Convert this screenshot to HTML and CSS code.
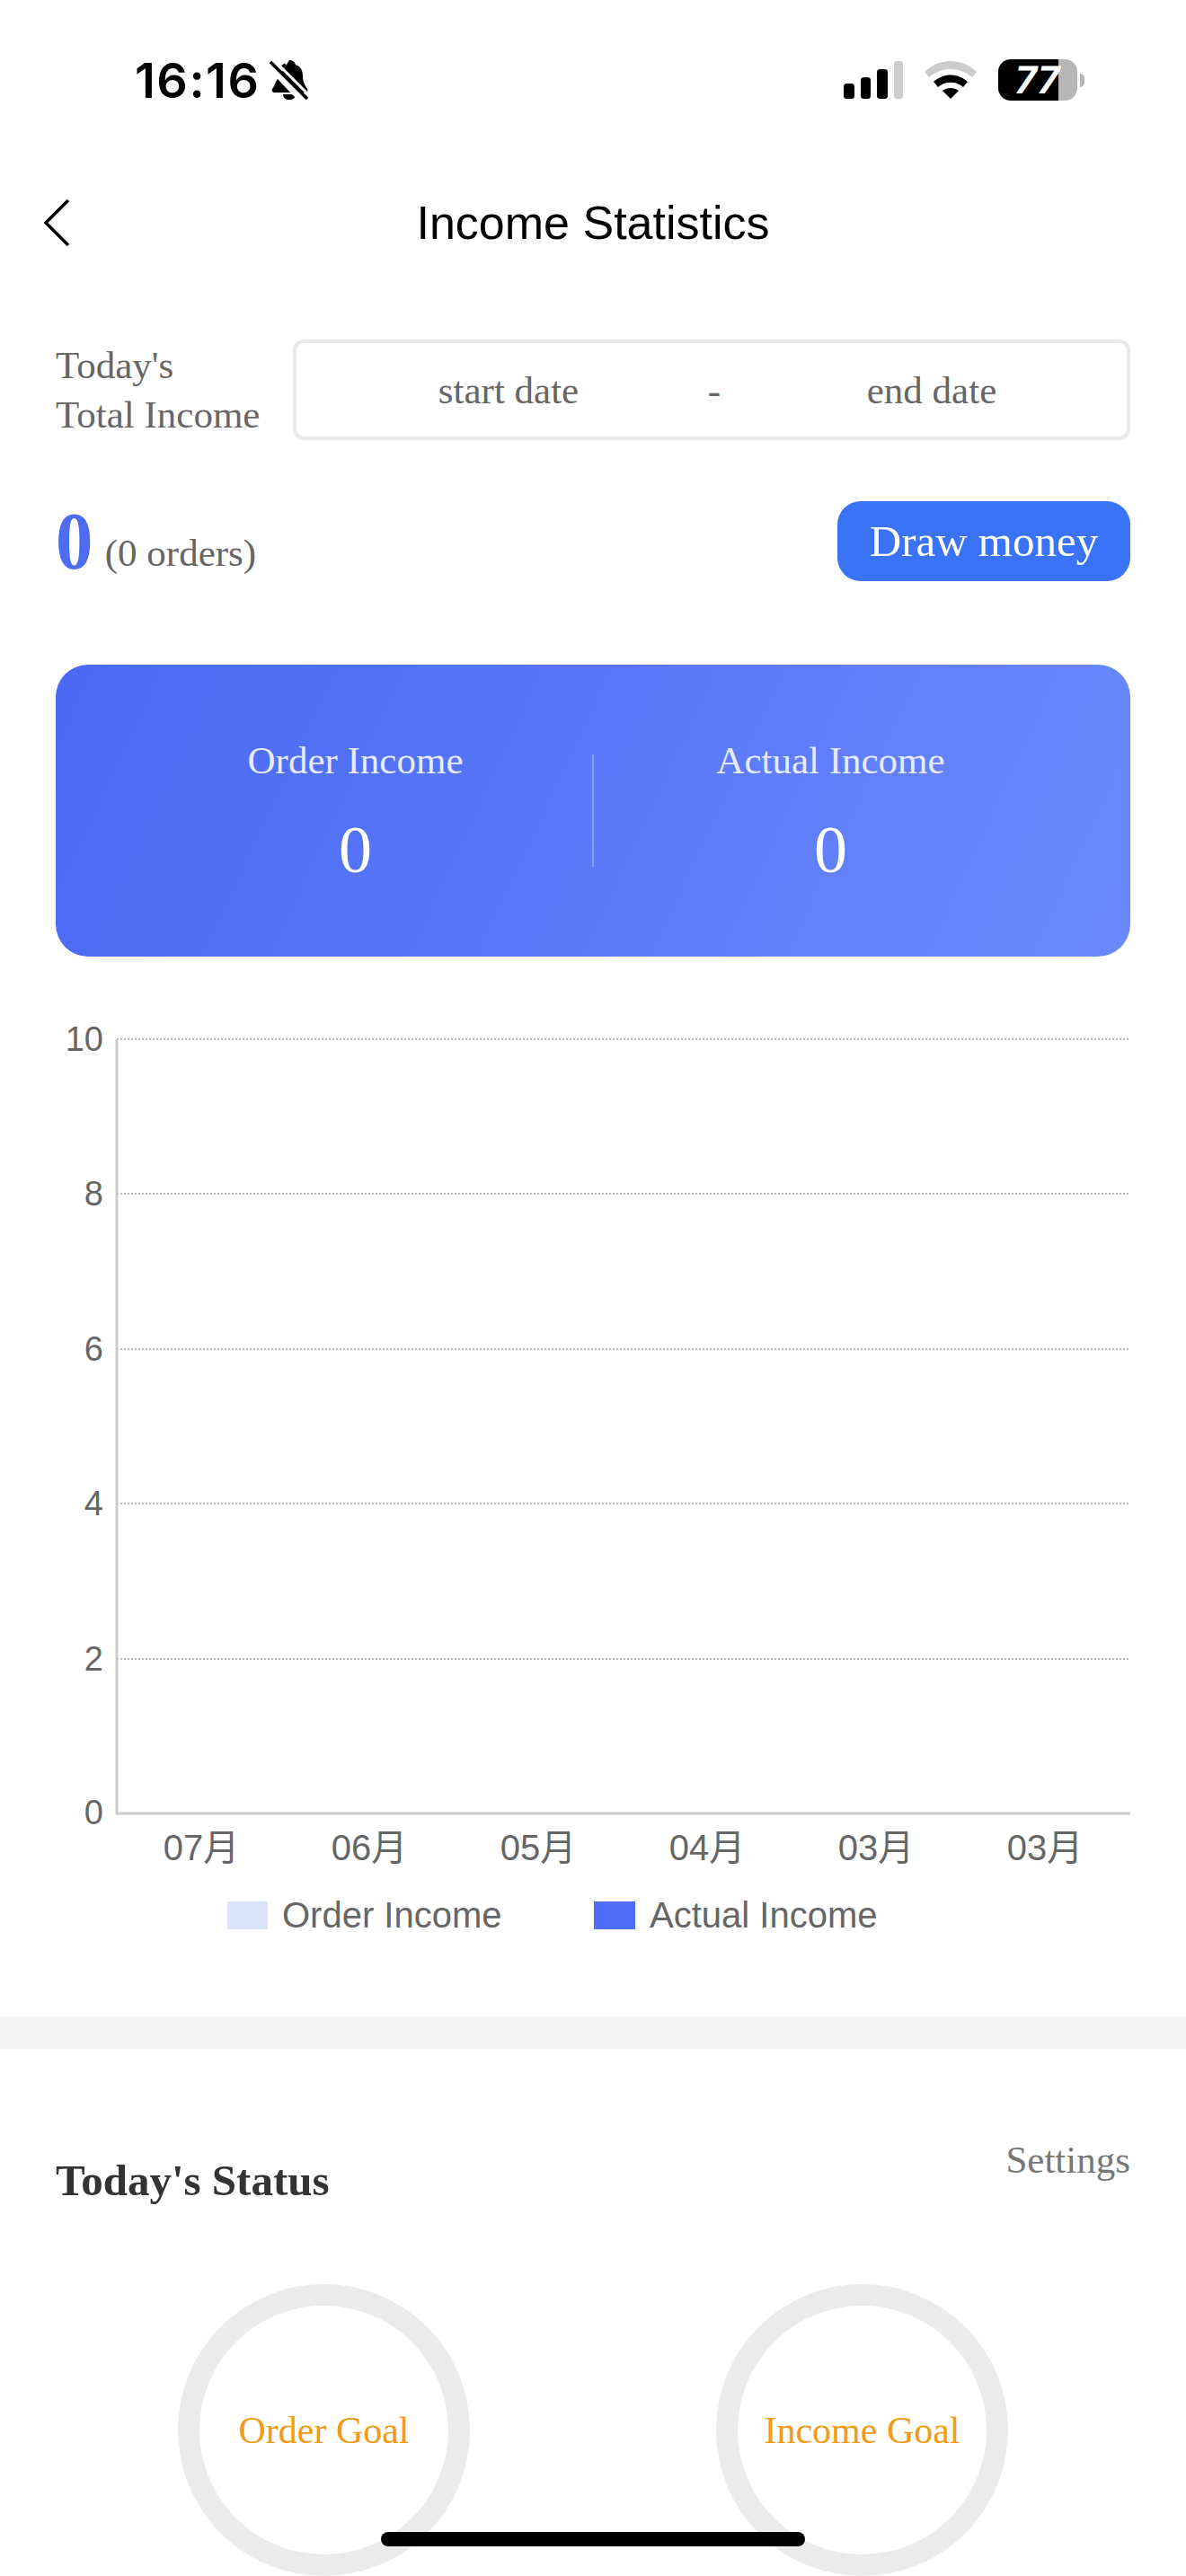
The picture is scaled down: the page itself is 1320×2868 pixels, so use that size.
FILE: index.html
```html
<!DOCTYPE html>
<html lang="en">
<head>
    <meta charset="UTF-8">
    <title>Income Statistics</title>
    <link rel="stylesheet" href="styles.css">
</head>
<body>
    <div class="pantalla">
        <div class="status-bar">
            <div class="status-left">
                <span class="hora">16:16</span>
                <svg class="campana" width="44" height="46" viewBox="0 0 44 46">
                    <path d="M22 1c4 0 6 2 7 5 6 2 8 7 8 13 0 6 2 9 5 14 1 2 0 4-2 4L6 37c-3 0-4-2-3-4 2-3 3-5 4-8z" fill="#000"/>
                    <path d="M14 9c1-1 2-2 4-3" stroke="#000" stroke-width="4" fill="none"/>
                    <path d="M15 39h14c0 4-3 6-7 6s-7-2-7-6z" fill="#000"/>
                    <path d="M1 7l36 38" stroke="#fff" stroke-width="9"/>
                    <path d="M1 3l41 41" stroke="#000" stroke-width="3.5"/>
                    <path d="M6 2l36 36" stroke="#fff" stroke-width="3"/>
                </svg>
            </div>
            <div class="status-right">
                <svg width="66" height="42" viewBox="0 0 66 42">
                    <rect x="0" y="25" width="12" height="17" rx="3.5" fill="#000"/>
                    <rect x="19" y="18" width="11" height="24" rx="3.5" fill="#000"/>
                    <rect x="37" y="9" width="12" height="33" rx="3.5" fill="#000"/>
                    <rect x="56" y="0" width="10" height="42" rx="3.5" fill="#ccc"/>
                </svg>
                <svg class="wifi" width="58" height="42" viewBox="0 0 58 42">
                    <path d="M0 12C16-4 42-4 58 12l-5 6C39 6 19 6 5 18z" fill="#ccc"/>
                    <path d="M10 23c11-10 27-10 38 0l-5 6c-8-7-20-7-28 0z" fill="#000"/>
                    <path d="M20 33c5-4 13-4 18 0l-9 9z" fill="#000"/>
                </svg>
                <div class="bateria">
                    <div class="bateria-nivel"><span>77</span></div>
                    <div class="bateria-resto"></div>
                    <div class="bateria-punta"></div>
                </div>
            </div>
        </div>

        <div class="nav">
            <svg class="atras" width="30" height="54" viewBox="0 0 30 54">
                <path d="M28 2L3 27l25 25" stroke="#000" stroke-width="3.5" fill="none"/>
            </svg>
            <h1>Income Statistics</h1>
        </div>

        <div class="resumen">
            <div class="fila-fecha">
                <div class="etiqueta">Today's<br>Total Income</div>
                <div class="rango">
                    <span class="fecha">start date</span>
                    <span class="guion">-</span>
                    <span class="fecha">end date</span>
                </div>
            </div>

            <div class="fila-total">
                <div class="total"><strong>0</strong> <span>(0 orders)</span></div>
                <button class="retirar">Draw money</button>
            </div>

            <div class="tarjeta">
                <div class="dato">
                    <p>Order Income</p>
                    <b>0</b>
                </div>
                <div class="separador"></div>
                <div class="dato">
                    <p>Actual Income</p>
                    <b>0</b>
                </div>
            </div>
        </div>

        <svg class="grafica" width="1320" height="1180" viewBox="0 1065 1320 1180">
            <g stroke="#bbb" stroke-width="2" stroke-dasharray="2 2">
                <path d="M130 1157H1258"/>
                <path d="M130 1329H1258"/>
                <path d="M130 1502H1258"/>
                <path d="M130 1674H1258"/>
                <path d="M130 1847H1258"/>
            </g>
            <path d="M130 1157V2019H1258" stroke="#ccc" stroke-width="3" fill="none"/>
            <g class="eje-y" text-anchor="end">
                <text x="115" y="1170">10</text>
                <text x="115" y="1342">8</text>
                <text x="115" y="1515">6</text>
                <text x="115" y="1687">4</text>
                <text x="115" y="1860">2</text>
                <text x="115" y="2031">0</text>
            </g>
            <g class="eje-x" text-anchor="middle">
                <text x="224" y="2071">07月</text>
                <text x="411" y="2071">06月</text>
                <text x="599" y="2071">05月</text>
                <text x="787" y="2071">04月</text>
                <text x="975" y="2071">03月</text>
                <text x="1163" y="2071">03月</text>
            </g>
            <rect x="253" y="2117" width="45" height="31" fill="#d9e4fc"/>
            <text class="leyenda" x="314" y="2146">Order Income</text>
            <rect x="661" y="2117" width="46" height="31" fill="#4e6cf5"/>
            <text class="leyenda" x="723" y="2146">Actual Income</text>
        </svg>

        <div class="banda"></div>

        <div class="estado">
            <div class="estado-cabecera">
                <h2>Today's Status</h2>
                <a class="ajustes">Settings</a>
            </div>
            <div class="metas">
                <div class="meta">Order Goal</div>
                <div class="meta">Income Goal</div>
            </div>
        </div>

        <div class="home"></div>
    </div>
</body>
</html>
```

FILE: styles.css
```css
* {
    margin: 0;
    padding: 0;
    box-sizing: border-box;
}

body {
    background: #fff;
    font-family: "Liberation Serif", serif;
}

.pantalla {
    position: relative;
    width: 1320px;
    height: 2868px;
    overflow: hidden;
}

/* Barra de estado */
.status-bar {
    height: 178px;
    padding: 0 113px 0 150px;
    display: flex;
    align-items: center;
    justify-content: space-between;
}

.status-left {
    display: flex;
    align-items: center;
    gap: 11px;
}

.hora {
    font-family: Inter, sans-serif;
    font-weight: 600;
    font-size: 54px;
    letter-spacing: 1.5px;
    color: #000;
}

.status-right {
    display: flex;
    align-items: flex-end;
    height: 46px;
    padding-bottom: 2px;
}

.wifi {
    margin-left: 24px;
}

.bateria {
    display: flex;
    align-items: center;
    height: 46px;
    margin-left: 24px;
    margin-bottom: -2px;
}

.bateria-nivel {
    width: 67px;
    height: 46px;
    background: #000;
    border-radius: 14px 0 0 14px;
    color: #fff;
    font-family: Inter, sans-serif;
    font-weight: 700;
    font-size: 42px;
    line-height: 46px;
    text-align: right;
}

.bateria-nivel span {
    display: inline-block;
    transform: skewX(-10deg);
    margin-right: -2px;
}

.bateria-resto {
    width: 21px;
    height: 46px;
    background: #b6b6b6;
    border-radius: 0 14px 14px 0;
}

.bateria-punta {
    width: 5px;
    height: 15px;
    margin-left: 3px;
    background: #b6b6b6;
    border-radius: 0 6px 6px 0;
}

/* Titulo */
.nav {
    position: relative;
    height: 140px;
    display: flex;
    align-items: center;
    justify-content: center;
}

.nav h1 {
    font-family: "Liberation Sans", sans-serif;
    font-weight: 400;
    font-size: 52px;
    color: #000;
}

.atras {
    position: absolute;
    left: 48px;
    top: 43px;
}

/* Resumen */
.resumen {
    padding: 60px 62px 0;
}

.fila-fecha {
    display: flex;
    align-items: center;
    justify-content: space-between;
}

.etiqueta {
    font-size: 43px;
    line-height: 55px;
    color: #666;
}

.rango {
    width: 932px;
    height: 112px;
    padding-left: 32px;
    border: 4px solid #e8e8e8;
    border-radius: 12px;
    display: grid;
    grid-template-columns: 408px 50px 1fr;
    align-items: center;
    text-align: center;
    font-size: 43px;
    color: #666;
}

.fila-total {
    margin-top: 68px;
    display: flex;
    align-items: center;
    justify-content: space-between;
}

.total {
    font-size: 43px;
    color: #666;
}

.total strong {
    display: inline-block;
    font-size: 92px;
    line-height: 89px;
    color: #4e6cf0;
    transform: scaleX(0.9);
    transform-origin: left;
    margin-right: -2px;
}

.total span {
    position: relative;
    top: -3px;
}

.retirar {
    width: 326px;
    height: 89px;
    border: none;
    border-radius: 26px;
    background: #3a73f5;
    color: #fff;
    font-family: "Liberation Serif", serif;
    font-size: 49px;
}

.tarjeta {
    margin-top: 93px;
    height: 325px;
    padding-top: 6px;
    border-radius: 36px;
    background: linear-gradient(115deg, #4a68f2, #6b89fd);
    display: flex;
    align-items: center;
    color: #fff;
}

.dato {
    width: 50%;
    text-align: center;
}

.dato:first-child {
    padding-left: 70px;
}

.dato:last-child {
    padding-right: 70px;
}

.dato p {
    font-size: 43px;
    line-height: 50px;
    color: #e6ebff;
    position: relative;
    top: -4px;
}

.dato b {
    display: block;
    margin-top: 30px;
    font-weight: 400;
    font-size: 74px;
    line-height: 80px;
}

.separador {
    width: 2px;
    height: 125px;
    margin-top: -6px;
    background: rgba(255, 255, 255, 0.3);
    flex-shrink: 0;
}

/* Grafica */
.grafica {
    display: block;
}

.grafica text {
    font-family: "Liberation Sans", "Noto Sans CJK SC", sans-serif;
    fill: #666;
}

.eje-y text {
    font-size: 38px;
}

.eje-x text {
    font-size: 40px;
}

.leyenda {
    font-size: 40px;
}

.banda {
    height: 36px;
    background: #f4f4f4;
}

/* Estado de hoy */
.estado {
    padding: 0 62px;
}

.estado-cabecera {
    height: 170px;
    display: flex;
    justify-content: space-between;
    padding-top: 100px;
}

.estado-cabecera h2 {
    font-size: 49px;
    line-height: 94px;
    color: #333;
}

.ajustes {
    font-size: 43px;
    line-height: 48px;
    color: #777;
}

.metas {
    margin-top: 92px;
    display: flex;
    gap: 274px;
    padding-left: 136px;
}

.meta {
    width: 325px;
    height: 325px;
    flex-shrink: 0;
    border: 24px solid #ebebeb;
    border-radius: 50%;
    display: flex;
    align-items: center;
    justify-content: center;
    font-size: 42px;
    color: #f39a17;
}

.home {
    position: absolute;
    left: 424px;
    top: 2819px;
    width: 472px;
    height: 16px;
    border-radius: 8px;
    background: #000;
}
```
